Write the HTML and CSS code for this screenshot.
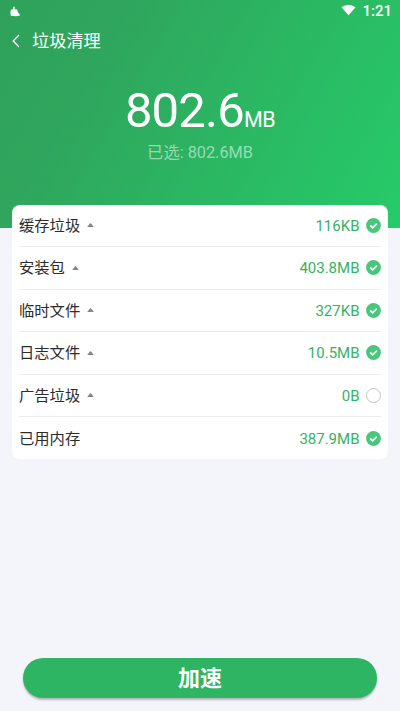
FILE: index.html
```html
<!DOCTYPE html>
<html lang="zh-CN">
<head>
<meta charset="utf-8">
<title>垃圾清理</title>
<link rel="stylesheet" href="styles.css">
</head>
<body>
<svg class="defs" width="0" height="0">
  <symbol id="check" viewBox="0 0 15 15"><circle cx="7.5" cy="7.5" r="7.4" fill="#48c67c"/><path d="M4.2 7.5l2.5 2.3 4.2-4.1" fill="none" stroke="#fff" stroke-width="1.7"/></symbol>
  <symbol id="empty" viewBox="0 0 15 15"><circle cx="7.5" cy="7.5" r="7" fill="#fff" stroke="#bdbdbd" stroke-width=".9"/></symbol>
  <symbol id="caret" viewBox="0 0 7 4"><path d="M.2 4L2.9.6q.6-.6 1.2 0L6.8 4z" fill="#858585"/></symbol>
</svg>
<header class="hero">
  <div class="status">
    <svg class="app-icon" viewBox="0 0 10 11"><path d="M3.2.8h1.5v2.4l2.6.3.4 2.5 2 2.2v1.5q-3.8.9-8.9 0L.5 7.5V5.2l.8-1.7 1.9-.3z" fill="#fff"/></svg>
    <svg class="wifi" viewBox="0 0 16 12"><path d="M.5 3Q8-2.4 15.5 3L8 11.7z" fill="#fff"/></svg>
    <span class="clock">1:21</span>
  </div>
  <div class="titlebar">
    <svg class="back" viewBox="0 0 8 14"><path d="M7 1L1.2 7 7 13" fill="none" stroke="#fff" stroke-width="1.3"/></svg>
    <h1 class="title">垃圾清理</h1>
  </div>
  <div class="total"><span class="number">802.6</span><span class="unit">MB</span></div>
  <div class="selected">已选: 802.6MB</div>
</header>
<main class="card">
  <div class="row"><span class="name">缓存垃圾</span><svg class="caret"><use href="#caret"/></svg><span class="size">116KB</span><svg class="mark"><use href="#check"/></svg></div>
  <div class="row"><span class="name">安装包</span><svg class="caret"><use href="#caret"/></svg><span class="size">403.8MB</span><svg class="mark"><use href="#check"/></svg></div>
  <div class="row"><span class="name">临时文件</span><svg class="caret"><use href="#caret"/></svg><span class="size">327KB</span><svg class="mark"><use href="#check"/></svg></div>
  <div class="row"><span class="name">日志文件</span><svg class="caret"><use href="#caret"/></svg><span class="size">10.5MB</span><svg class="mark"><use href="#check"/></svg></div>
  <div class="row"><span class="name">广告垃圾</span><svg class="caret"><use href="#caret"/></svg><span class="size">0B</span><svg class="mark"><use href="#empty"/></svg></div>
  <div class="row"><span class="name">已用内存</span><span class="size">387.9MB</span><svg class="mark"><use href="#check"/></svg></div>
</main>
<button class="boost">加速</button>
</body>
</html>
```
FILE: styles.css
```css
* { box-sizing: border-box; }
body {
  margin: 0;
  height: 711px;
  display: flex;
  flex-direction: column;
  overflow: hidden;
  background: #f4f5fa;
  font-family: Roboto, "Noto Sans CJK SC", sans-serif;
}
.defs { position: absolute; }
.hero {
  height: 228px;
  flex: none;
  color: #fff;
  background: linear-gradient(120deg, #2fa15b 0%, #2fa65d 25%, #26cb69 100%);
}
.status { height: 22px; display: flex; align-items: center; padding: 0 8px 0 10px; }
.app-icon { width: 10px; height: 11px; }
.wifi { width: 15px; height: 12px; margin: 0 6px 2px auto; }
.clock { font-size: 15px; font-weight: 500; line-height: 22px; }
.titlebar { height: 38px; display: flex; align-items: center; padding-left: 12px; }
.back { width: 8px; height: 14px; margin-right: 12px; }
.title { margin: 0; font-size: 17.2px; font-weight: 400; line-height: 24px; }
.total { height: 81px; display: flex; justify-content: center; align-items: baseline; padding-top: 22px; line-height: 58px; }
.number { font-size: 49px; letter-spacing: -.8px; }
.unit { font-size: 21.5px; letter-spacing: -.5px; }
.selected { text-align: center; font-size: 16.3px; line-height: 24px; color: rgba(255, 255, 255, .52); }
.card {
  position: relative;
  flex: none;
  margin: -23.5px 12px 0;
  padding: 0 7px;
  height: 254px;
  display: grid;
  grid-template-rows: repeat(6, 42.5px);
  border-radius: 8px;
  background: #fff;
}
.row { display: flex; align-items: center; border-bottom: 1px solid #ececec; }
.row:last-child { border-bottom: 0; }
.name { font-size: 15.3px; line-height: 22px; padding-top: 1px; color: #2c2c2c; }
.caret { width: 7px; height: 4px; margin-left: 7px; }
.size { margin-left: auto; font-size: 15px; line-height: 22px; padding-top: 1px; color: #35b264; }
.mark { width: 15px; height: 15px; margin-left: 6.5px; }
.boost {
  margin: auto 23px 13px;
  height: 40px;
  border: 0;
  border-radius: 20px;
  background: #2db563;
  color: #fff;
  font: 700 22px/40px Roboto, "Noto Sans CJK SC", sans-serif;
  padding: 1px 0 0;
  box-shadow: 0 2px 2px rgba(0, 0, 0, .25);
}
```
